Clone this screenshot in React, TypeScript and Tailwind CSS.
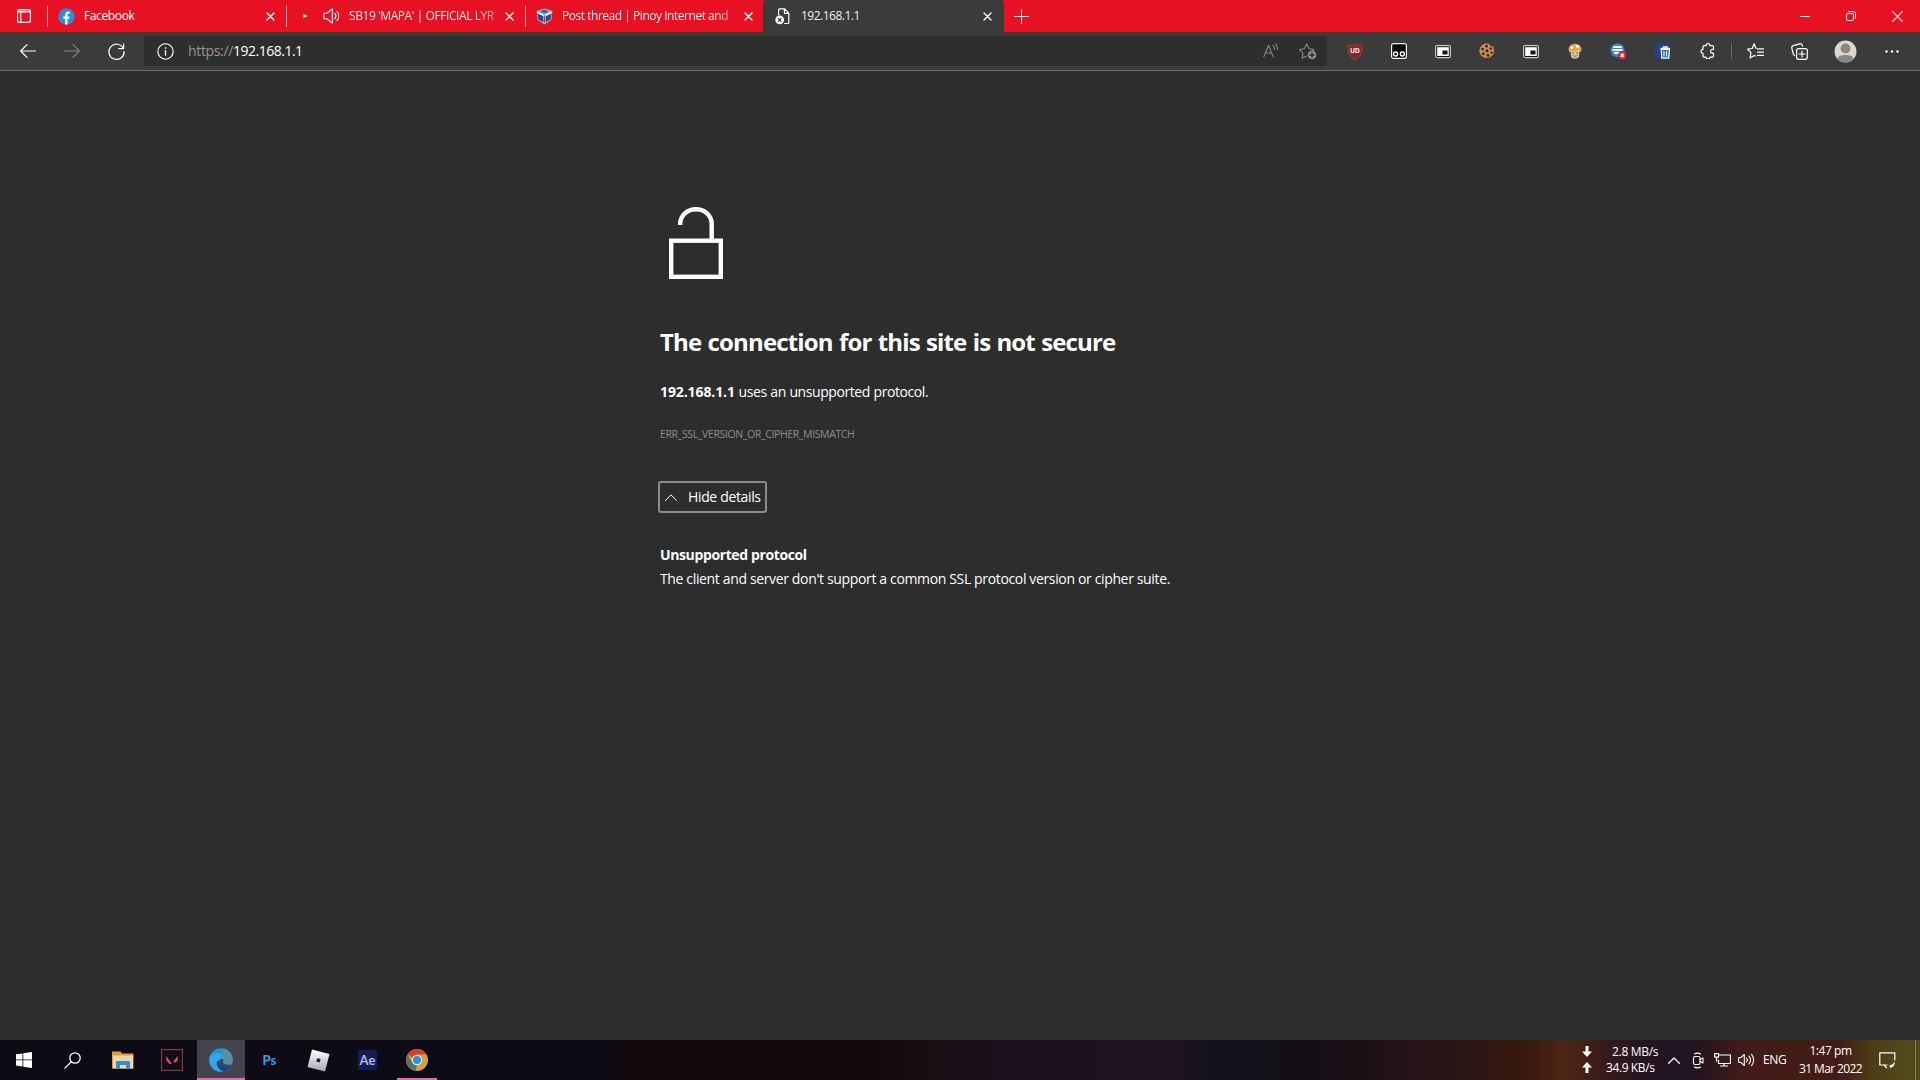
import type { ReactNode } from "react";

const line = { fill: "none", stroke: "currentColor", strokeLinecap: "round", strokeLinejoin: "round" } as const;

function Cell({ className, children }: { className: string; children: ReactNode }) {
  return <div className={`flex shrink-0 items-center justify-center ${className}`}>{children}</div>;
}

function Cross() {
  return (
    <svg width="9" height="9" viewBox="0 0 9 9" {...line} strokeWidth="1.4" className="mt-px shrink-0">
      <path d="M1 1l7 7M8 1l-7 7" />
    </svg>
  );
}

function Title({ className, children }: { className: string; children: ReactNode }) {
  return <span className={`pb-px text-xs leading-4 whitespace-nowrap ${className}`}>{children}</span>;
}

function TitleBar() {
  return (
    <div className="flex h-8 shrink-0 items-center bg-[#e81123]">
      <Cell className="h-8 w-[47px]">
        <svg width="14" height="14" viewBox="0 0 14 14" {...line} strokeWidth="1.1" className="ml-px">
          <rect x=".6" y=".6" width="12.8" height="12.8" rx="2" />
          <path d="M.8 2.2h12.4M1 3h12M3.8 3.5v9.5" />
        </svg>
      </Cell>

      <div className="flex h-[21px] w-[239px] items-center border-l border-[#f8a9ae] pl-[10px]">
        <svg width="17" height="17" viewBox="0 0 17 17" className="shrink-0">
          <circle cx="8.5" cy="8.5" r="8.2" fill="#2590dc" />
          <path d="M7.2 16.6v-5.8H5.3V8.4h1.9V6.6c0-2 1.1-3 3-3 .6 0 1.2.1 1.5.2v2h-1c-.9 0-1.2.5-1.2 1.1v1.5h2.1l-.4 2.4H9.5v5.8z" fill="#fff" />
        </svg>
        <Title className="ml-[9px] w-[176px] tracking-[-0.37px]">Facebook</Title>
        <span className="ml-[6px] flex"><Cross /></span>
      </div>

      <div className="flex h-[21px] w-[239px] items-center border-l border-[#f8a9ae] pl-4">
        <svg width="5" height="6" viewBox="0 0 5 6" className="shrink-0"><path d="M.5 1l4 2-4 2z" fill="#fff" /></svg>
        <svg width="17" height="16" viewBox="0 0 17 16" {...line} strokeWidth="1.1" className="ml-[15px] shrink-0">
          <path d="M.8 5.2h3.1L9.400.900v14.200l-5.500-4.300H.8z" />
          <path d="M11.800 5.400a4 4 0 0 1 0 5.200M14 3.500a7 7 0 0 1 0 9" />
        </svg>
        <Title className="ml-[9px] w-[147px] bg-linear-to-r from-white from-85% to-white/50 bg-clip-text tracking-[-0.42px] text-transparent">
          SB19 'MAPA' | OFFICIAL LYR
        </Title>
        <span className="ml-[9px] flex"><Cross /></span>
      </div>

      <div className="flex h-[21px] w-[239px] items-center border-l border-[#f8a9ae] pl-[10px]">
        <svg width="17" height="17" viewBox="0 0 17 17" className="shrink-0">
          <path d="M8.500.500l8 2.500-1.200 9-6.800 4.500L1.700 12 .5 3z" fill="#aab4c0" />
          <path d="M1.500 5.500l5.500 2.500v6l-4.500-2.500z" fill="#1f4b98" />
          <path d="M15.500 5.500l-5.500 2.500v6l4.500-2.500z" fill="#2a4f91" />
          <path d="M4 3.200l4.500-1.700L13 3.200 8.500 5.500z" fill="#2f66ae" />
          <path d="M8.500 6l1 7-1 2.500-1-2.500z" fill="#b53a48" />
          <path d="M1.500 4.500l6 3M15.500 4.500l-6 3" stroke="#fff" strokeWidth="1.300" />
        </svg>
        <Title className="ml-[9px] w-[167px] bg-linear-to-r from-white from-93% to-white/55 bg-clip-text tracking-[-0.47px] text-transparent">
          Post thread | Pinoy Internet and
        </Title>
        <span className="ml-[15px] flex"><Cross /></span>
      </div>

      <div className="-ml-px flex h-8 w-[241px] items-center rounded-t-[4px] bg-[#3b3b3b] pl-[12px]">
        <svg width="15" height="17" viewBox="0 0 15 17" {...line} strokeWidth="1.200" className="shrink-0">
          <path d="M3.600 7V1.900a1 1 0 0 1 1-1h5l4.200 4.200v9.400a1 1 0 0 1-1 1H9.600M9.400 1v4.300h4.300" />
          <circle cx="4.700" cy="11.800" r="4.400" fill="#fff" stroke="none" />
          <path d="M3.200 10.300l3 3M6.200 10.300l-3 3" stroke="#3b3b3b" />
        </svg>
        <Title className="ml-[11px] w-[175px] tracking-[-0.5px] text-[#f3efe6]">192.168.1.1</Title>
        <span className="ml-[7px] flex"><Cross /></span>
      </div>

      <svg width="15" height="15" viewBox="0 0 15 15" {...line} strokeWidth="1" className="ml-[10px] shrink-0">
        <path d="M7.500.500v14M.5 7.500h14" />
      </svg>

      <div className="ml-auto flex h-8 items-center pr-[17px]">
        <svg width="10" height="2" viewBox="0 0 10 2" {...line} strokeWidth="1"><path d="M0 1.500h10" /></svg>
        <svg width="10" height="10" viewBox="0 0 10 10" {...line} strokeWidth="1" className="ml-[36px]">
          <rect x=".5" y="2.500" width="7" height="7" rx="1.300" />
          <path d="M2.500.600h5a2 2 0 0 1 2 2v4.800" />
        </svg>
        <svg width="11" height="11" viewBox="0 0 11 11" {...line} strokeWidth="1.200" className="ml-[36px]">
          <path d="M.7.700l9.600 9.600M10.300.700L.7 10.300" />
        </svg>
      </div>
    </div>
  );
}

function PipIcon() {
  return (
    <svg width="16" height="16" viewBox="0 0 16 16">
      <path d="M3 2V.5M5.500 2V.5M8 2V.5M10.500 2V.5M13 2V.5" stroke="#555" />
      <rect x=".6" y="2.600" width="14.800" height="12" rx="1.500" fill="#111" stroke="#c9c9cf" strokeWidth="1.200" />
      <rect x="2.200" y="4.200" width="11.600" height="8.800" fill="#fff" />
      <rect x="7.500" y="7.500" width="5" height="4" fill="#10152b" />
    </svg>
  );
}

function Toolbar() {
  return (
    <div className="flex h-[39px] shrink-0 items-center border-b border-[#6b6e6b] bg-[#3b3b3b] text-white">
      <svg width="16" height="14" viewBox="0 0 16 14" {...line} strokeWidth="1.200" className="ml-5">
        <path d="M15.500 7H.8M7 .7L.7 7 7 13.300" />
      </svg>
      <svg width="16" height="14" viewBox="0 0 16 14" {...line} strokeWidth="1.100" className="ml-7 text-[#828282]">
        <path d="M.5 7h14.700M9 .7L15.300 7 9 13.300" />
      </svg>
      <svg width="17" height="17" viewBox="0 0 17 17" {...line} strokeWidth="1.200" className="ml-7">
        <path d="M15.200 5.200A7.600 7.600 0 1 0 16.100 8.500M15.600.900v4.700h-4.800" />
      </svg>

      <div className="ml-[19px] flex h-[30px] w-[1183px] items-center rounded-[4px] bg-[#2e2e2e] pr-[10px] pl-[13px]">
        <svg width="17" height="17" viewBox="0 0 17 17" {...line} strokeWidth="1.100">
          <circle cx="8.500" cy="8.500" r="7.700" />
          <path d="M8.500 7.600v4.600" strokeWidth="1.300" />
          <circle cx="8.500" cy="5" r=".5" fill="currentColor" strokeWidth=".6" />
        </svg>
        <span className="ml-[14px] pb-px text-sm leading-5 whitespace-nowrap">
          <span className="tracking-[-0.34px] text-[#9b9394]">https://</span>
          <span className="tracking-[-0.5px]">192.168.1.1</span>
        </span>
        <svg width="16" height="15" viewBox="0 0 16 15" {...line} strokeWidth="1.100" className="mb-0.5 ml-auto text-[#858585]">
          <path d="M.7 14L5.500 2.200 10.300 14M2.400 10h6.200M10 2.500a4.500 4.500 0 0 1 1.500 4M12.300.800a7 7 0 0 1 2.300 5.900" />
        </svg>
        <svg width="18" height="18" viewBox="0 0 18 18" {...line} strokeWidth="1.100" className="ml-5 text-[#8a8a8a]">
          <path d="M7.600 14l-4.500 2.300.9-5L.5 7.600l4.900-.8L7.700 2l2.300 4.800 4.900.8-1 1" />
          <circle cx="13" cy="13" r="4.300" fill="#929292" stroke="none" />
          <path d="M13 10.700v4.600M10.700 13h4.600" stroke="#2e2e2e" strokeWidth="1.300" />
        </svg>
      </div>

      <div className="ml-[6px] flex items-center">
        <Cell className="w-11">
          <svg width="16" height="17" viewBox="0 0 16 17">
            <path d="M8 .5c2.300 1.600 4.700 2 7.200 2.100.2 6.300-1 10.500-7.200 13.900C1.800 13.100.6 8.900.8 2.600 3.300 2.500 5.700 2.100 8 .5z" fill="#8c2424" stroke="#a84c46" strokeWidth=".7" />
            <text x="8" y="10" textAnchor="middle" fontSize="6.500" fontWeight="700" fill="#fff" fontFamily="Liberation Sans, sans-serif">UD</text>
          </svg>
        </Cell>
        <Cell className="w-11">
          <svg width="16" height="16" viewBox="0 0 16 16">
            <rect x=".6" y=".6" width="14.800" height="14.800" rx="2" fill="#08080a" stroke="#f2f2f2" strokeWidth="1.200" />
            <circle cx="4.600" cy="11" r="2" fill="#08080a" stroke="#fff" strokeWidth="1.400" />
            <circle cx="11.400" cy="11" r="2" fill="#08080a" stroke="#fff" strokeWidth="1.400" />
          </svg>
        </Cell>
        <Cell className="w-11"><PipIcon /></Cell>
        <Cell className="w-11">
          <svg width="16" height="16" viewBox="0 0 16 16">
            <path d="M9.500.700A7.300 7.300 0 1 0 15 7.500l-.5-4-2.500-.3z" fill="#cb8f4f" />
            <g fill="#33211a">
              <circle cx="7.500" cy="3.200" r="1.400" /><circle cx="3.500" cy="6" r="1.300" /><circle cx="8" cy="7.800" r="1.500" />
              <circle cx="11.800" cy="5.500" r="1.300" /><circle cx="4.300" cy="10.800" r="1.400" /><circle cx="9" cy="12.400" r="1.400" />
              <circle cx="12.500" cy="9.600" r="1.200" />
            </g>
          </svg>
        </Cell>
        <Cell className="w-11"><PipIcon /></Cell>
        <Cell className="w-11">
          <svg width="14" height="16" viewBox="0 0 14 16">
            <path d="M.5 6.500C.5 3 3.500.700 7 .7s6.500 2.300 6.500 5.800L12.800 9H1.200z" fill="#e4a24b" />
            <circle cx="4" cy="4.500" r="1.600" fill="#fff3dc" /><circle cx="9.500" cy="3.500" r="1.700" fill="#fff3dc" />
            <path d="M2.500 7.500h9l-.5 6.300L9.300 15.500H4.700L3 13.800z" fill="#dcc49c" />
            <path d="M5 9v1.500M9 9v1.500" stroke="#5d4a35" /><path d="M4.500 12.300c1.500 1.200 3.500 1.200 5 0" stroke="#8a6c48" fill="none" />
          </svg>
        </Cell>
        <Cell className="w-11">
          <svg width="17" height="17" viewBox="0 0 17 17" className="-ml-px">
            <circle cx="7.500" cy="7.300" r="7" fill="#2b8bcf" />
            <path d="M3.300 4h8.400M2.500 7h10M4 10h6" stroke="#fff" strokeWidth="1.800" />
            <circle cx="12.300" cy="12.300" r="4.300" fill="#d12a2a" />
            <path d="M10.700 10.700l3.200 3.200M13.900 10.700l-3.200 3.200" stroke="#fff" strokeWidth="1.400" />
          </svg>
        </Cell>
        <Cell className="w-11">
          <svg width="16" height="16" viewBox="0 0 16 16">
            <rect width="15" height="15.500" fill="#27408a" />
            <path d="M5.500 5.500h9.500M8.500 5.300V3.800h3.500v1.500" stroke="#fff" strokeWidth="1.300" fill="none" />
            <path d="M6.200 6.500l.6 8.700h7l.6-8.700z" fill="#2f61b5" stroke="#fff" strokeWidth="1.200" />
            <path d="M9 8v5.500M11.600 8v5.500" stroke="#fff" strokeWidth="1.100" />
          </svg>
        </Cell>
        <Cell className="w-11">
          <svg width="15" height="16" viewBox="0 0 15 16" {...line} strokeWidth="1.200">
            <path d="M4 2.700h2a2 2 0 0 1 4 0h2.500a1 1 0 0 1 1 1v2.600h-1a1.900 1.900 0 0 0 0 3.800h1v3a1 1 0 0 1-1 1H10a2 2 0 0 1-4 0H4a1 1 0 0 1-1-1v-2.800a2 2 0 0 1 0-4V3.700a1 1 0 0 1 1-1z" />
          </svg>
        </Cell>
      </div>
      <div className="ml-[2px] h-4 w-px bg-[#6a6a6a]" />
      <div className="ml-px flex items-center">
        <Cell className="w-11">
          <svg width="17" height="16" viewBox="0 0 17 16" {...line} strokeWidth="1.200">
            <path d="M9 5.500L7.200.800 5.200 5.500l-4.600.6 3.300 3.500-.8 5.300 4.100-2.500 1 .6M10.500 5.800h6M10.500 9.100h6M10.500 12.400h6" />
          </svg>
        </Cell>
        <Cell className="w-11">
          <svg width="17" height="17" viewBox="0 0 17 17" {...line} strokeWidth="1.200">
            <rect x="5.600" y="5.600" width="10.700" height="10.700" rx="2" />
            <path d="M11 8v6M8 11h6M3.500 12.500C2.600 12 2.300 11.300 2.100 10.400L.8 5.200C.5 3.900 1 3 2.300 2.600L8.700.800c1.300-.3 2.200.2 2.600 1.500l.2.900" />
          </svg>
        </Cell>
        <Cell className="w-[48px]">
          <svg width="23" height="23" viewBox="0 0 23 23">
            <circle cx="11.500" cy="11.500" r="11" fill="#dcd7cf" />
            <circle cx="11.500" cy="8.500" r="5" fill="#8d8681" />
            <path d="M3.200 18.600c1.300-2.500 3.500-3.500 8.300-3.500s7 1 8.300 3.500a11 11 0 0 1-16.600 0z" fill="#8d8681" />
          </svg>
        </Cell>
        <Cell className="w-11">
          <svg width="14" height="3" viewBox="0 0 14 3" fill="#fff" className="ml-px">
            <circle cx="1.500" cy="1.500" r="1.200" /><circle cx="7" cy="1.500" r="1.200" /><circle cx="12.500" cy="1.500" r="1.200" />
          </svg>
        </Cell>
      </div>
    </div>
  );
}

function ErrorPage() {
  return (
    <main className="flex min-h-0 flex-1 flex-col items-start bg-[#2d2d2d] pl-[660px] whitespace-nowrap">
      <svg width="54" height="72" viewBox="0 0 54 72" className="mt-[136px] ml-[9px]" fill="none" stroke="#fff">
        <path d="M11.200 18v-1C11.200 8 18.500 2.300 27 2.300S42.700 8 42.700 17v15" strokeWidth="4.400" />
        <rect x="2.200" y="33.700" width="49.600" height="36.100" strokeWidth="4.400" />
      </svg>
      <h1 className="mt-[47px] text-2xl leading-8 font-bold tracking-[-0.84px] [word-spacing:0.8px]">
        The connection for this site is not secure
      </h1>
      <p className="mt-[24px] text-sm leading-5">
        <strong className="font-bold tracking-[-0.1px]">192.168.1.1</strong>
        <span className="tracking-[-0.42px] [word-spacing:0.4px]"> uses an unsupported protocol.</span>
      </p>
      <p className="mt-[24px] text-[10.500px] leading-4 tracking-[-0.37px] text-[#968a88]">ERR_SSL_VERSION_OR_CIPHER_MISMATCH</p>
      <button className="mt-[39px] -ml-[2px] flex h-8 w-[109px] items-center rounded-[3px] border-2 border-[#8b8b8b] pl-[5px]">
        <svg width="12" height="7" viewBox="0 0 12 7" {...line} strokeWidth="1"><path d="M.5 6.500L6 .8l5.500 5.700" /></svg>
        <span className="ml-[11px] text-sm leading-5 tracking-[-0.35px]">Hide details</span>
      </button>
      <h2 className="mt-[32px] text-sm leading-5 font-bold tracking-[-0.38px]">Unsupported protocol</h2>
      <p className="mt-[4px] text-sm leading-5 tracking-[-0.355px]">
        The client and server don't support a common SSL protocol version or cipher suite.
      </p>
    </main>
  );
}

function Taskbar() {
  return (
    <footer className="flex h-10 shrink-0 items-center bg-[linear-gradient(90deg,#0c0c15_0px,#0e0b15_250px,#0b0b15_590px,#120809_640px,#130809_840px,#160e12_920px,#1b121d_1010px,#1d1320_1170px,#14121c_1220px,#130e13_1310px,#23121a_1400px,#35180f_1520px,#4e2615_1565px,#371a1a_1605px,#221420_1650px,#221420_1695px,#401b18_1740px,#451c15_1840px,#4d3c18_1872px,#51491a_1900px,#51491a_1920px)]">
      <Cell className="h-10 w-12">
        <svg width="16" height="16" viewBox="0 0 16 16" fill="#fff">
          <path d="M0 2.300l6.500-.9v6.100H0zM7.300 1.300L16 0v7.500H7.300zM0 8.300h6.500v6.200L0 13.600zM7.300 8.300H16V16l-8.700-1.300z" />
        </svg>
      </Cell>
      <Cell className="h-10 w-[49px]">
        <svg width="17" height="17" viewBox="0 0 17 17" {...line} strokeWidth="1.300">
          <circle cx="11" cy="6" r="5.200" /><path d="M7.300 9.700L.9 16.100" />
        </svg>
      </Cell>
      <Cell className="ml-px h-10 w-[49px]">
        <svg width="22" height="18" viewBox="0 0 22 18">
          <path d="M0 .5h8.500l1.500 2h11.500v15H0z" fill="#dd9d3e" />
          <path d="M1 4.500h20v13H1z" fill="#f1d6a4" />
          <path d="M4 17.500V11a1 1 0 0 1 1-1h12a1 1 0 0 1 1 1v6.500h-4V14H8v3.500z" fill="#2f92d8" />
        </svg>
      </Cell>
      <Cell className="h-10 w-[50px]">
        <svg width="22" height="22" viewBox="0 0 22 22">
          <rect x=".6" y=".6" width="20.800" height="20.800" fill="#120c16" stroke="#8d3e3c" strokeWidth="1.100" />
          <path d="M5.300 7l5.500 8H8.500L5.300 11.200zM16.700 7v4.200l-1.700 2h-3.200z" fill="#ee4a5e" />
        </svg>
      </Cell>
      <Cell className="h-10 w-12 bg-[#44454c] shadow-[inset_0_-2px_0_#e26aa9]">
        <svg width="24" height="24" viewBox="0 0 24 24">
          <circle cx="12" cy="12" r="11.800" fill="#2d91dc" />
          <path d="M14 .4C20 1.500 23.700 6.200 23.800 11.300c0 3.500-2.800 5.500-5.800 5.500-3.300 0-4.500-1.500-3.500-3 1.500-2.500.3-5-2-6.300z" fill="#5d8f9b" />
          <path d="M.3 11C1.500 6.300 6 4.800 10 5.500c3.800.7 5.800 3.500 5 6.500-1.500-2.500-5.500-2-6.800 1-1.400 3.500.8 8 4.800 10.500C6 24.500-.3 18.500.3 11z" fill="#37a5e8" />
          <path d="M8.200 13c-1.800 5 2.300 9.500 6.800 10.400 3-.9 5.500-2.600 7-5.200-4 1.800-10 1-12-5z" fill="#17458f" />
          <path d="M10.200 13.200c.3-2 2.600-3.400 4.500-1.600-1.800 2.600-.3 4.800 3.500 5.200h5.300l-1.300 1.800c-4 1.800-10.800.3-12-5.400z" fill="#44454c" />
        </svg>
      </Cell>
      <Cell className="h-10 w-[49px]">
        <span className="pb-px font-['Lato',sans-serif] text-[13px] leading-4 font-black text-[#2f9ee0]">Ps</span>
      </Cell>
      <Cell className="h-10 w-[49px]">
        <svg width="23" height="23" viewBox="0 0 23 23">
          <defs><linearGradient id="rb" x1="0" y1="0" x2="0" y2="1"><stop offset="0" stopColor="#fff" /><stop offset="1" stopColor="#a9a5ad" /></linearGradient></defs>
          <path d="M5 .5l17.500 4.600L18 22.500.500 18z" fill="url(#rb)" />
          <path d="M10.200 9.200l3.400.9-.9 3.400-3.400-.9z" fill="#14121c" />
        </svg>
      </Cell>
      <Cell className="h-10 w-[49px]">
        <span className="flex h-5 w-[19px] items-center justify-center rounded-[2px] bg-[#151d52] pb-px font-['Lato',sans-serif] text-[13px] leading-4 font-bold text-[#b3b5ee]">Ae</span>
      </Cell>
      <Cell className="ml-[5px] h-10 w-10 shadow-[inset_0_-2px_0_#e26aa9]">
        <svg width="22" height="22" viewBox="0 0 22 22">
          <circle cx="11" cy="11" r="11" fill="#d9a13c" />
          <path d="M11 11L1.500 5.500A11 11 0 0 1 20.500 5.500H11z" fill="#d9402c" />
          <path d="M1.500 5.500l5 8.300L11 15.500 9.800 22A11 11 0 0 1 1.500 5.500z" fill="#58726c" />
          <circle cx="11" cy="11" r="5.200" fill="#eee" /><circle cx="11" cy="11" r="4.100" fill="#2c93dc" />
        </svg>
      </Cell>

      <div className="ml-auto flex h-10 items-center text-xs leading-4 whitespace-nowrap">
        <div className="flex w-[11px] flex-col gap-[5px] pb-0.5">
          <svg width="12" height="11" viewBox="0 0 11 11" fill="#fff"><path d="M4 0h3v5.500h3.500l-5 5.500-5-5.500H4z" /></svg>
          <svg width="12" height="11" viewBox="0 0 11 11" fill="#fff"><path d="M4 11h3V5.500h3.500L5.500 0l-5 5.500H4z" /></svg>
        </div>
        <div className="ml-[14px] flex w-[54px] flex-col pb-px">
          <span className="pl-[6px] tracking-[-0.3px]">2.8 MB/s</span>
          <span className="tracking-[-0.4px]">34.9 KB/s</span>
        </div>
        <svg width="12" height="7" viewBox="0 0 12 7" {...line} strokeWidth="1.300" className="ml-[8px]"><path d="M.7 6.300L6 1l5.300 5.300" /></svg>
        <svg width="12" height="17" viewBox="0 0 12 17" {...line} strokeWidth="1.100" className="ml-[12px]">
          <rect x="1.500" y="4.500" width="6.500" height="8" rx="1.500" /><path d="M8 7.500l3-1.500v5L8 9.500M2.500 2C4 .8 7 .8 8.500 2M2.500 15c1.500 1.200 4.500 1.200 6 0" />
        </svg>
        <svg width="17" height="14" viewBox="0 0 17 14" {...line} strokeWidth="1.200" className="ml-[10px]">
          <path d="M5.500 2h11v8.500h-12V7M10 10.500V13M6.500 13h7M.6.600h4v3.500h-4zM2.600 4.100v4" />
        </svg>
        <svg width="17" height="14" viewBox="0 0 17 14" {...line} strokeWidth="1.100" className="ml-[7px]">
          <path d="M.6 4.700h2.200L6.300 1.500v11L2.800 9.300H.6zM8.500 5a3 3 0 0 1 0 4M11 3.200a6 6 0 0 1 0 7.600M13.600 1.300a9 9 0 0 1 0 11.400" />
        </svg>
        <span className="ml-[8px] w-[25px] tracking-[-0.4px]">ENG</span>
        <div className="ml-[9px] flex w-[67px] flex-col items-center gap-[2px] pb-px">
          <span className="tracking-[-0.45px]">1:47 pm</span>
          <span className="tracking-[-0.61px]">31 Mar 2022</span>
        </div>
        <svg width="17" height="17" viewBox="0 0 17 17" {...line} strokeWidth="1.200" className="ml-[15px]">
          <path d="M8 13H7l-2 0H.8V.8h15v7M5 13l2.500 2.800" />
          <path d="M15.500 9.500c.8 3.500-1.500 6.500-5 6.500 1-1 0-2.500-.6-3 2 .8 4.600-1 5.600-3.500z" fill="#fff" stroke="none" />
        </svg>
        <div className="mr-1 ml-[19px] h-10 w-px bg-[#8a8455]" />
      </div>
    </footer>
  );
}

export default function App() {
  return (
    <div className="flex h-[1080px] w-[1920px] flex-col overflow-hidden bg-[#2d2d2d] font-['Open_Sans','Noto_Sans',sans-serif] text-white">
      <TitleBar />
      <Toolbar />
      <ErrorPage />
      <Taskbar />
    </div>
  );
}
